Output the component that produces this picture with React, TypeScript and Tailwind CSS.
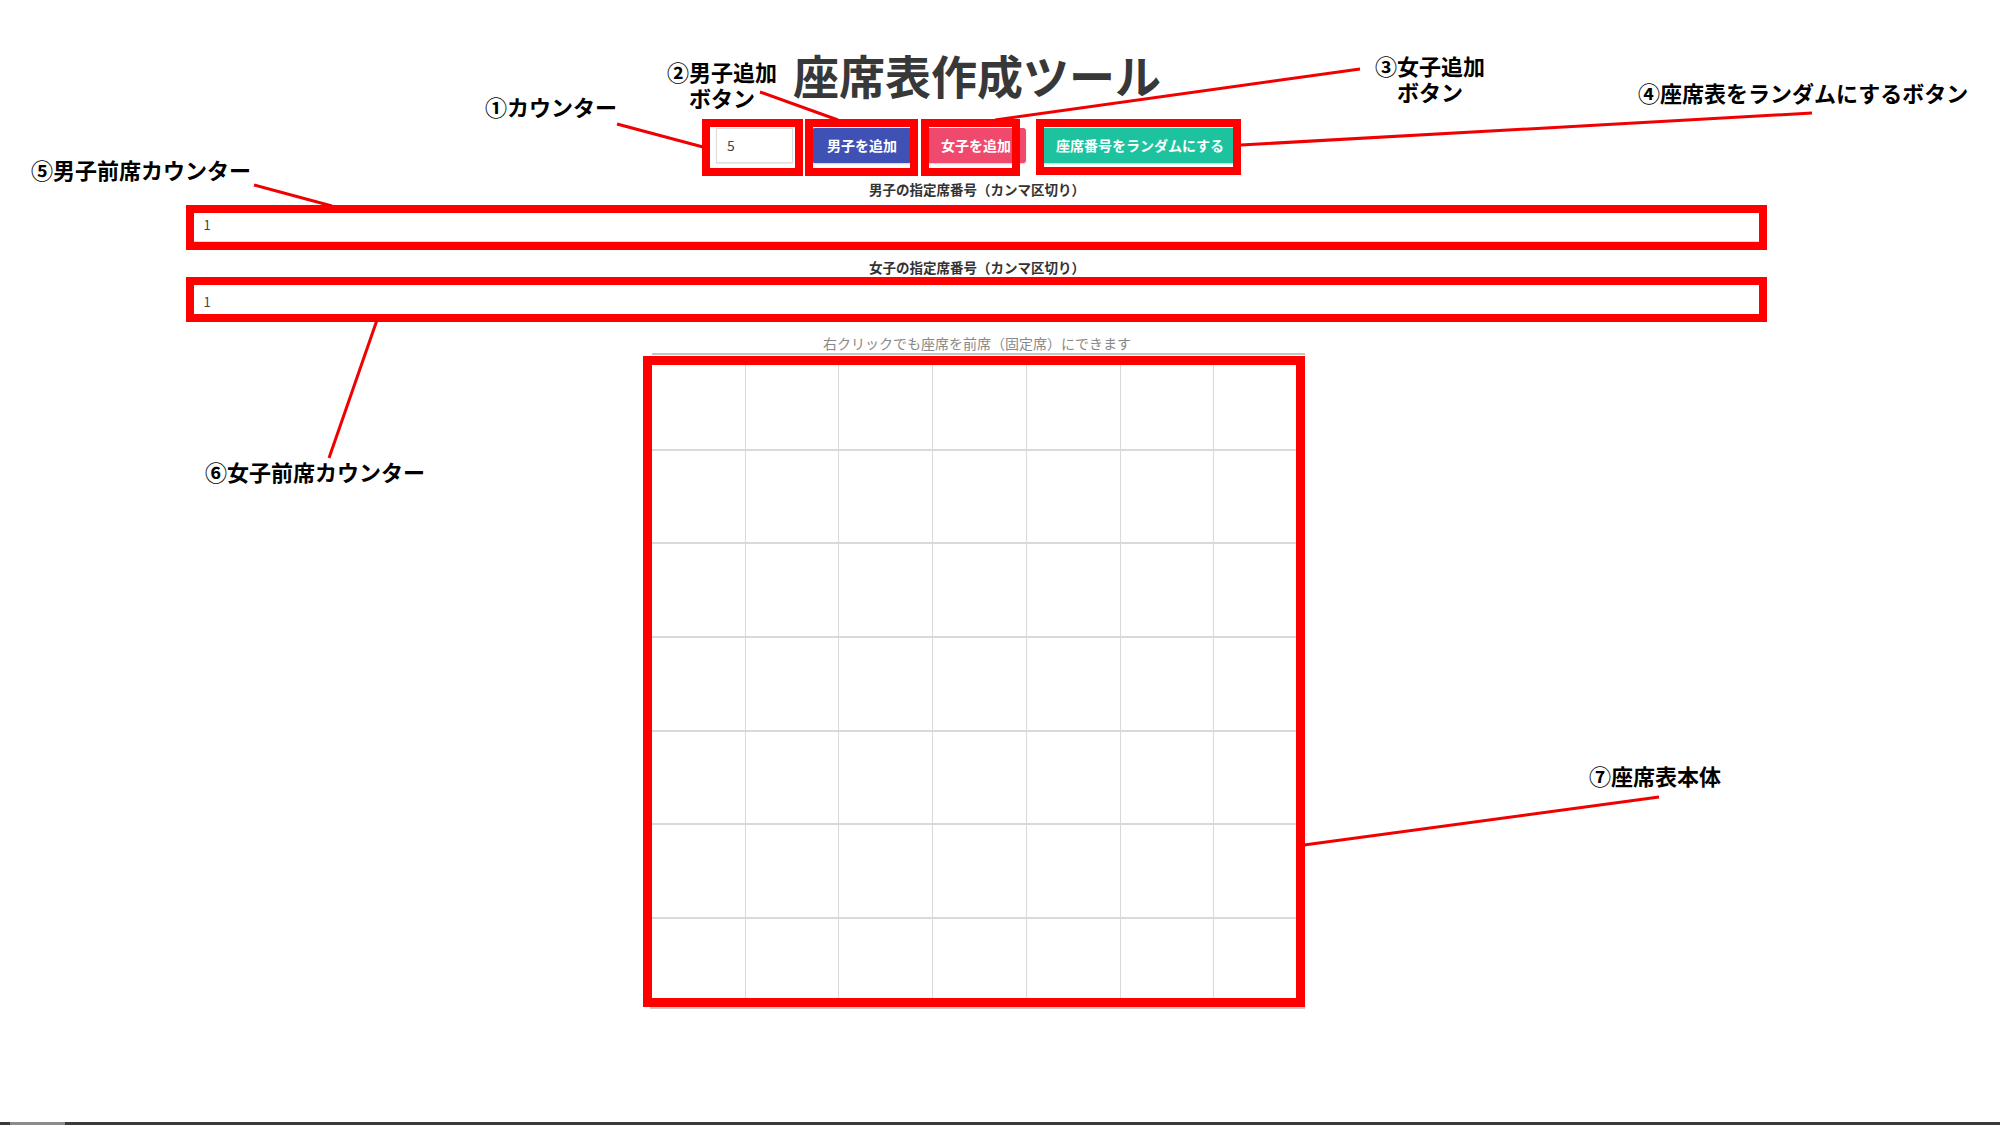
const COLS = 7;
const ROWS = 7;

// annotation boxes drawn over the screenshot: outer edges + stroke thickness
const BOXES = [
  { x0: 702, y0: 119, x1: 803, y1: 176, t: 8 },
  { x0: 805, y0: 119, x1: 918, y1: 176, t: 8 },
  { x0: 921, y0: 119, x1: 1020, y1: 176, t: 8 },
  { x0: 1036, y0: 119, x1: 1241, y1: 175, t: 8 },
  { x0: 186, y0: 205, x1: 1767, y1: 250, t: 8 },
  { x0: 186, y0: 277, x1: 1767, y1: 322, t: 8 },
  { x0: 643, y0: 356, x1: 1305, y1: 1007, t: 9 },
];

const LEADERS: [number, number, number, number][] = [
  [617, 124, 703, 147],
  [760, 92, 838, 120],
  [1360, 69, 995, 120],
  [1812, 113, 1241, 145],
  [254, 185, 332, 206],
  [377, 320, 329, 458],
  [1659, 797, 1304, 845],
];

export default function App() {
  return (
    <div className="relative flex h-[1125px] w-[2000px] flex-col overflow-hidden bg-white font-['Noto_Sans_CJK_JP',sans-serif]">
      <main className="flex w-[1954px] flex-col items-center">
        <h1 className="mt-[46px] text-[46px] leading-[56px] font-bold text-[#383838]">
          座席表作成ツール
        </h1>

        <div className="mt-[26px] flex h-[35px] items-stretch pl-[2px]">
          <input
            className="w-[77px] border border-[#dcdcdc] px-[10px] text-[14px] text-[#444] shadow-[0_1px_1px_rgba(0,0,0,0.08)] outline-none"
            value="5"
            readOnly
          />
          <SeatButton className="ml-[19px] w-[100px] bg-[#3f51b5]">男子を追加</SeatButton>
          <SeatButton className="ml-[14px] w-[100px] bg-[#ef4a6d]">女子を追加</SeatButton>
          <SeatButton className="ml-[14px] w-[200px] bg-[#1dc39f]">
            座席番号をランダムにする
          </SeatButton>
        </div>

        <p className="mt-[16px] text-[13.5px] leading-[20px] font-bold text-[#333]">
          男子の指定席番号（カンマ区切り）
        </p>
        <SeatInput className="mt-[8px] h-[35px]" />

        <p className="mt-[15px] text-[13.5px] leading-[20px] font-bold text-[#333]">
          女子の指定席番号（カンマ区切り）
        </p>
        <SeatInput className="mt-[7px] h-[34px]" />

        <p className="mt-[15px] text-[14px] leading-[20px] text-[#888]">
          右クリックでも座席を前席（固定席）にできます
        </p>

        {/* seat grid: clipped where the screenshot cuts it off */}
        <div className="ml-[3px] h-[654px] w-[653px] overflow-hidden border-t-2 border-[#c4c4c4] pt-[2px]">
          <div className="grid w-[656px] grid-cols-7">
            {Array.from({ length: ROWS * COLS }, (_, i) => (
              <div
                key={i}
                className={`h-[93.7px] border-[#d9d9d9] ${
                  i % COLS === COLS - 1 ? 'border-r-0' : 'border-r'
                } ${i >= (ROWS - 1) * COLS ? 'border-b-0' : 'border-b-2'}`}
              />
            ))}
          </div>
        </div>
      </main>

      <div className="mt-auto flex h-[3px] w-full bg-[#3a3a3a]">
        <div className="ml-[10px] h-full w-[55px] bg-[#8c8c8c]" />
      </div>

      <Annotations />
    </div>
  );
}

function SeatButton({ className, children }: { className: string; children: string }) {
  return (
    <button
      className={`flex items-center justify-center rounded-[3px] text-[14px] font-bold text-white shadow-[0_1px_2px_rgba(0,0,0,0.2)] ${className}`}
    >
      {children}
    </button>
  );
}

function SeatInput({ className }: { className: string }) {
  return (
    <input
      className={`w-[1573px] border border-[#dcdcdc] pl-[12px] text-[13px] text-[#444] outline-none ${className}`}
      value="1"
      readOnly
    />
  );
}

function Annotations() {
  return (
    <div className="pointer-events-none absolute inset-0 text-[22px] leading-[26px] font-bold text-black">
      <svg className="absolute inset-0" width={2000} height={1125}>
        <rect x={650} y={1007} width={655} height={2} fill="#c8c8c8" />
        {BOXES.map((b, i) => (
          <rect
            key={i}
            x={b.x0 + b.t / 2}
            y={b.y0 + b.t / 2}
            width={b.x1 - b.x0 - b.t}
            height={b.y1 - b.y0 - b.t}
            fill="none"
            stroke="#ff0000"
            strokeWidth={b.t}
          />
        ))}
        {LEADERS.map(([x1, y1, x2, y2], i) => (
          <line key={i} x1={x1} y1={y1} x2={x2} y2={y2} stroke="#f00000" strokeWidth={3} />
        ))}
      </svg>

      <div className="absolute top-[93px] left-[485px]">①カウンター</div>
      <div className="absolute top-[58px] left-[662px] w-[120px] text-center">
        ②男子追加
        <br />
        ボタン
      </div>
      <div className="absolute top-[52px] left-[1370px] w-[120px] text-center">
        ③女子追加
        <br />
        ボタン
      </div>
      <div className="absolute top-[79px] left-[1638px]">④座席表をランダムにするボタン</div>
      <div className="absolute top-[156px] left-[31px]">⑤男子前席カウンター</div>
      <div className="absolute top-[458px] left-[205px]">⑥女子前席カウンター</div>
      <div className="absolute top-[762px] left-[1589px]">⑦座席表本体</div>
    </div>
  );
}
